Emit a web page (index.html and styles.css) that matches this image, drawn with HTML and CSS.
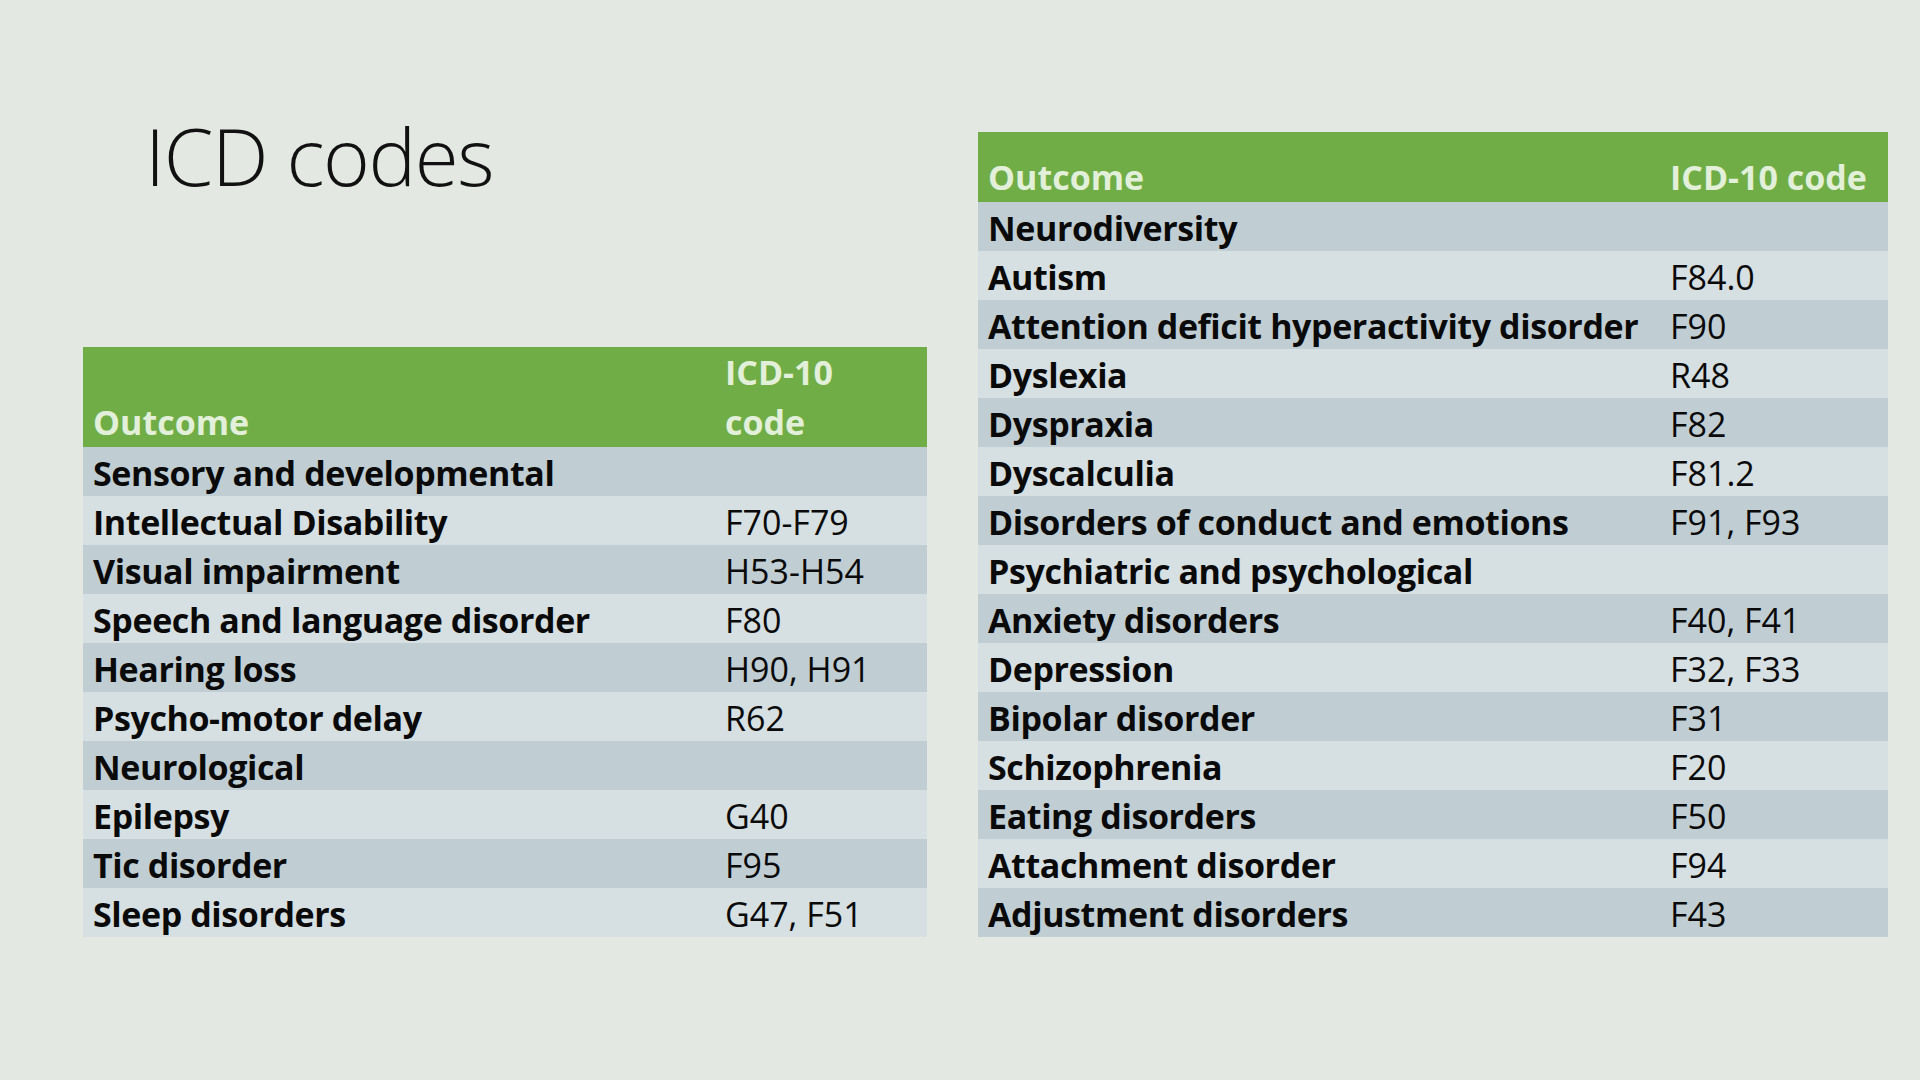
FILE: index.html
```html
<!DOCTYPE html>
<html lang="en">
<head>
<meta charset="utf-8">
<title>ICD codes</title>
<link rel="stylesheet" href="styles.css">
</head>
<body>
<main class="slide">
  <section class="col-left">
    <h1 class="title">ICD codes</h1>
    <table class="icd icd-left">
      <colgroup><col class="c-outcome-l"><col class="c-code-l"></colgroup>
      <thead>
        <tr class="head head-tall"><th>Outcome</th><th>ICD-10<br>code</th></tr>
      </thead>
      <tbody>
        <tr><td>Sensory and developmental</td><td></td></tr>
        <tr><td>Intellectual Disability</td><td class="code">F70-F79</td></tr>
        <tr><td>Visual impairment</td><td class="code">H53-H54</td></tr>
        <tr><td>Speech and language disorder</td><td class="code">F80</td></tr>
        <tr><td>Hearing loss</td><td class="code">H90, H91</td></tr>
        <tr><td>Psycho-motor delay</td><td class="code">R62</td></tr>
        <tr><td>Neurological</td><td></td></tr>
        <tr><td>Epilepsy</td><td class="code">G40</td></tr>
        <tr><td>Tic disorder</td><td class="code">F95</td></tr>
        <tr><td>Sleep disorders</td><td class="code">G47, F51</td></tr>
      </tbody>
    </table>
  </section>
  <section class="col-right">
    <table class="icd icd-right">
      <colgroup><col class="c-outcome-r"><col class="c-code-r"></colgroup>
      <thead>
        <tr class="head head-short"><th>Outcome</th><th>ICD-10 code</th></tr>
      </thead>
      <tbody>
        <tr><td>Neurodiversity</td><td></td></tr>
        <tr><td>Autism</td><td class="code">F84.0</td></tr>
        <tr><td>Attention deficit hyperactivity disorder</td><td class="code">F90</td></tr>
        <tr><td>Dyslexia</td><td class="code">R48</td></tr>
        <tr><td>Dyspraxia</td><td class="code">F82</td></tr>
        <tr><td>Dyscalculia</td><td class="code">F81.2</td></tr>
        <tr><td>Disorders of conduct and emotions</td><td class="code">F91, F93</td></tr>
        <tr><td>Psychiatric and psychological</td><td></td></tr>
        <tr><td>Anxiety disorders</td><td class="code">F40, F41</td></tr>
        <tr><td>Depression</td><td class="code">F32, F33</td></tr>
        <tr><td>Bipolar disorder</td><td class="code">F31</td></tr>
        <tr><td>Schizophrenia</td><td class="code">F20</td></tr>
        <tr><td>Eating disorders</td><td class="code">F50</td></tr>
        <tr><td>Attachment disorder</td><td class="code">F94</td></tr>
        <tr><td>Adjustment disorders</td><td class="code">F43</td></tr>
      </tbody>
    </table>
  </section>
</main>
</body>
</html>
```
FILE: styles.css
```css
html, body {
  margin: 0;
  padding: 0;
}

body {
  background: #e3e9e2;
  width: 1920px;
  height: 1080px;
  overflow: hidden;
  font-family: "Open Sans", "Liberation Sans", sans-serif;
  color: #0a0a0a;
}

.slide {
  display: grid;
  grid-template-columns: 844px 910px;
  column-gap: 51px;
  padding: 107px 0 0 83px;
  box-sizing: border-box;
  height: 1080px;
}

.col-left {
  display: flex;
  flex-direction: column;
}

.title {
  margin: 0 0 144px 62px;
  font-weight: 300;
  font-size: 80px;
  letter-spacing: -1.4px;
  line-height: 96px;
  height: 96px;
  color: #111;
}

.col-right {
  padding-top: 25px;
}

.icd {
  border-collapse: collapse;
  table-layout: fixed;
}

.icd-left { width: 844px; }
.icd-right { width: 910px; }

.c-outcome-l { width: 632px; }
.c-code-l { width: 212px; }
.c-outcome-r { width: 682px; }
.c-code-r { width: 228px; }

.icd td {
  padding: 3px 0 0 10px;
  text-align: left;
  white-space: nowrap;
  font-size: 34px;
  font-weight: 700;
  letter-spacing: -0.4px;
  line-height: 46px;
  height: 49px;
  box-sizing: border-box;
}

.icd td.code {
  font-weight: 400;
  letter-spacing: 0;
}

.head {
  background: #70ad47;
}

.head th {
  padding: 0 0 0 10px;
  text-align: left;
  white-space: nowrap;
  font-size: 34px;
  color: #e2efd9;
  font-weight: 700;
  vertical-align: bottom;
  box-sizing: border-box;
}

.head-tall th {
  height: 100px;
  line-height: 50px;
}

.head-short th {
  height: 70px;
  line-height: 49px;
  padding-top: 21px;
}

.icd tbody tr:nth-child(odd) {
  background: #c0ced4;
}

.icd tbody tr:nth-child(even) {
  background: #d6dfe1;
}
```
